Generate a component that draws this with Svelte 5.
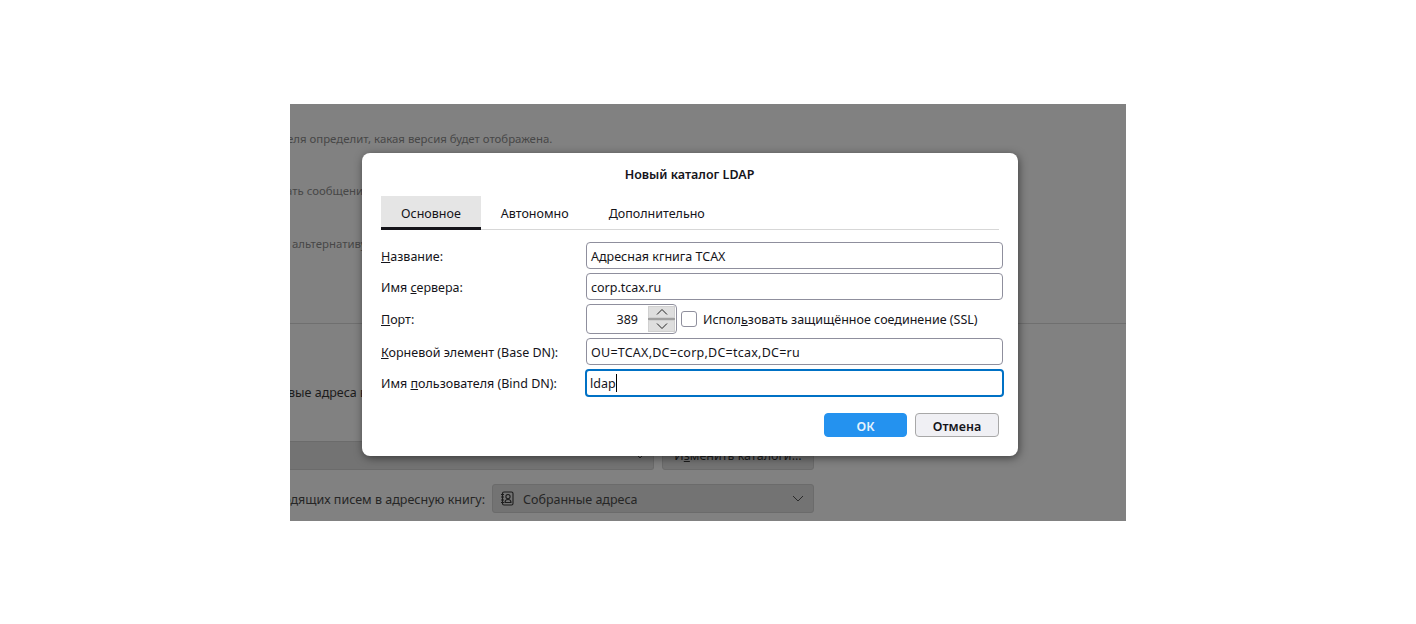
<script>
  const fields = [
    { key: 'name', before: '', mnemonic: 'Н', after: 'азвание:', value: 'Адресная кгнига TCAX' },
    { key: 'host', before: 'Имя ', mnemonic: 'с', after: 'ервера:', value: 'corp.tcax.ru' }
  ];
</script>

<div class="stage">
  <div class="backdrop">
    <p class="note first">еля определит, какая версия будет отображена.</p>
    <p class="note second">ать сообщения</p>
    <p class="note third">альтернативу</p>
    <div class="rule"></div>
    <p class="heading">вые адреса в</p>
    <div class="row dir-row">
      <div class="select wide">
        <svg class="chevron" width="12" height="7" viewBox="0 0 12 7" fill="none" stroke="#2a2a2a" stroke-width="1">
          <path d="M1 1l5 5 5-5" />
        </svg>
      </div>
      <div class="plain-btn">И<u>з</u>менить каталоги...</div>
    </div>
    <div class="row book-row">
      <div class="book-label"><span>одящих писем в адресную книгу:</span></div>
      <div class="select book">
        <svg width="14" height="15" viewBox="0 0 14 15" fill="none" stroke="#1d1d1d" stroke-width="1.1">
          <rect x="2.5" y="1" width="10.5" height="13" rx="1.5" />
          <path d="M1 3.5h3M1 6h3M1 9h3M1 11.5h3" />
          <circle cx="8" cy="5.6" r="2.1" />
          <path d="M5 11.5c0-2 1.2-3 3-3s3 1 3 3z" />
        </svg>
        <span class="book-value">Собранные адреса</span>
        <svg class="chevron" width="12" height="7" viewBox="0 0 12 7" fill="none" stroke="#2a2a2a" stroke-width="1">
          <path d="M1 1l5 5 5-5" />
        </svg>
      </div>
    </div>
  </div>

  <div class="dialog">
    <h1>Новый каталог LDAP</h1>
    <div class="tabs">
      <div class="tab active">Основное</div>
      <div class="tab">Автономно</div>
      <div class="tab">Дополнительно</div>
    </div>

    <div class="form">
      {#each fields as f (f.key)}
        <div class="label">{f.before}<u>{f.mnemonic}</u>{f.after}</div>
        <div class="input"><span>{f.value}</span></div>
      {/each}

      <div class="label port-label"><u>П</u>орт:</div>
      <div class="port-line">
        <div class="spinner">
          <span class="port">389</span>
          <div class="spin-btns">
            <div class="spin">
              <svg width="14" height="8" viewBox="0 0 14 8" fill="none" stroke="#222" stroke-width="1"><path d="M2 6.5l5-5 5 5" /></svg>
            </div>
            <div class="spin">
              <svg width="14" height="8" viewBox="0 0 14 8" fill="none" stroke="#222" stroke-width="1"><path d="M2 1.5l5 5 5-5" /></svg>
            </div>
          </div>
        </div>
        <div class="check"></div>
        <span class="check-label">Испол<u>ь</u>зовать защищённое соединение (SSL)</span>
      </div>

      <div class="label"><u>К</u>орневой элемент (Base DN):</div>
      <div class="input"><span class="dn">OU=TCAX,DC=corp,DC=tcax,DC=ru</span></div>

      <div class="label">Имя <u>п</u>ользователя (Bind DN):</div>
      <div class="input focused"><span>ldap</span><span class="caret"></span></div>
    </div>

    <div class="actions">
      <div class="btn primary">ОК</div>
      <div class="btn">Отмена</div>
    </div>
  </div>
</div>

<style>
  :global(body) {
    margin: 0;
    background: #fff;
  }

  .stage {
    position: relative;
    width: 836px;
    height: 417px;
    margin: 104px 0 0 290px;
    font-family: "Noto Sans", sans-serif;
    font-size: 12.5px;
    overflow: hidden;
    background: #818181;
  }

  .backdrop {
    display: flex;
    flex-direction: column;
    height: 100%;
    color: #262626;
  }

  .note {
    margin: 0;
    line-height: 16px;
    font-size: 11.4px;
    color: #474747;
    white-space: nowrap;
  }

  .note.first { margin-top: 27px; margin-left: -3px; }
  .note.second { margin-top: 36px; margin-left: -4px; }
  .note.third { margin-top: 37px; margin-left: 2px; }

  .rule {
    height: 1px;
    margin-top: 71px;
    background: #6f6f6f;
  }

  .heading {
    margin: 61px 0 0 -2px;
    line-height: 16px;
    color: #1c1c1c;
    white-space: nowrap;
  }

  .row {
    display: flex;
    align-items: center;
  }

  .dir-row {
    margin-top: 40px;
    gap: 8px;
  }

  .select {
    display: flex;
    align-items: center;
    background: #737373;
    border: 1px solid #6b6b6b;
    border-radius: 3px;
    box-sizing: border-box;
  }

  .select.wide {
    width: 364px;
    height: 29px;
    padding-right: 7px;
    border-left: none;
    border-radius: 0 3px 3px 0;
  }

  .plain-btn {
    width: 152px;
    height: 29px;
    box-sizing: border-box;
    background: #737373;
    border: 1px solid #6b6b6b;
    border-radius: 3px;
    text-align: center;
    line-height: 27px;
    color: #1c1c1c;
    white-space: nowrap;
  }

  .book-row {
    margin-top: 14px;
    gap: 7px;
  }

  .book-label {
    display: flex;
    justify-content: flex-end;
    width: 195px;
    padding-top: 1px;
    overflow: hidden;
    flex: none;
    white-space: nowrap;
  }

  .book-label span {
    flex: none;
  }

  .select.book {
    width: 322px;
    height: 29px;
    padding: 0 9px 0 7px;
  }

  .book-value {
    margin-left: 9px;
    padding-top: 1px;
  }

  .chevron {
    margin-left: auto;
    flex: none;
  }

  .dialog {
    position: absolute;
    left: 72px;
    top: 49px;
    width: 656px;
    height: 303px;
    box-sizing: border-box;
    padding: 0 15px 0 19px;
    background: #fff;
    border-radius: 8px;
    box-shadow: 1px 2px 8px rgba(0, 0, 0, 0.5);
    color: #15141a;
    z-index: 1;
  }

  h1 {
    margin: 0 5px 0 0;
    padding-top: 13px;
    height: 30px;
    line-height: 17px;
    text-align: center;
    font-size: 12.5px;
    font-weight: 600;
    box-sizing: content-box;
  }

  .tabs {
    display: flex;
    height: 33px;
    box-sizing: content-box;
    border-bottom: 1px solid #d7d7d7;
    margin-right: 4px;
  }

  .tab {
    padding: 0 20px;
    line-height: 35px;
    box-sizing: border-box;
    height: 33px;
  }

  .tab.active {
    background: #e5e5e5;
    border-bottom: 3px solid #15141a;
    margin-bottom: -1px;
    height: 34px;
  }

  .form {
    display: grid;
    grid-template-columns: 205px 417px;
    row-gap: 4px;
    align-items: center;
    margin-top: 12px;
  }

  .label {
    white-space: nowrap;
    padding-top: 1px;
  }

  .label.port-label {
    padding-top: 0;
  }

  .input {
    display: flex;
    align-items: center;
    height: 27px;
    box-sizing: border-box;
    padding: 1px 4px 0;
    border: 1px solid #8f8f9d;
    border-radius: 4px;
    white-space: nowrap;
  }

  .dn {
    letter-spacing: 0.24px;
  }

  .input.focused {
    height: 28px;
    border: 2px solid #0071c5;
    padding: 0 3px;
    margin-left: -1px;
    width: 419px;
  }

  .caret {
    width: 1px;
    height: 18px;
    background: #000;
  }

  .port-line {
    display: flex;
    align-items: center;
    height: 30px;
  }

  .spinner {
    display: flex;
    align-items: center;
    justify-content: flex-end;
    width: 91px;
    height: 30px;
    box-sizing: border-box;
    border: 1px solid #8f8f9d;
    border-radius: 4px;
    padding-right: 1px;
  }

  .port {
    margin-right: 10px;
  }

  .spin-btns {
    display: flex;
    flex-direction: column;
    width: 27px;
    background: #a0a0a0;
    gap: 2px;
  }

  .spin {
    display: flex;
    align-items: center;
    justify-content: center;
    height: 12px;
    background: #dedede;
    border: 1px solid #d0d0d0;
    box-sizing: border-box;
  }

  .check {
    width: 16px;
    height: 16px;
    margin-left: 4px;
    box-sizing: border-box;
    border: 1px solid #8f8f9d;
    border-radius: 3px;
  }

  .check-label {
    margin-left: 6px;
    white-space: nowrap;
  }

  .actions {
    display: flex;
    justify-content: flex-end;
    gap: 8px;
    margin-top: 16px;
    margin-right: 4px;
  }

  .btn {
    width: 84px;
    height: 24px;
    box-sizing: border-box;
    border: 1px solid #a8a8a8;
    border-radius: 4px;
    background: #f0f0f4;
    text-align: center;
    line-height: 25px;
    font-weight: 600;
  }

  .btn.primary {
    width: 83px;
    background: #2492ef;
    border-color: #2492ef;
    color: #e6f3fd;
  }
</style>
